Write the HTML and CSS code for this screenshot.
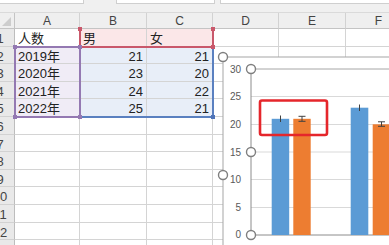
FILE: index.html
```html
<!DOCTYPE html>
<html lang="zh-CN">

<head>
    <meta charset="UTF-8" />
    <meta name="viewport" content="width=device-width, initial-scale=1.0" />
    <title>人数 - 图表</title>
    <link rel="stylesheet" href="styles.css">
</head>

<body>
    <!-- Formula bar strip -->
    <div class="topbar">
        <span class="box name-box"></span>
        <span class="box mid-box"></span>
        <span class="box formula-box"></span>
    </div>

    <div class="sheet">
        <div class="grid">
            <!-- Column headers -->
            <div class="corner"><span class="select-all"></span></div>
            <div class="col-head">A</div>
            <div class="col-head">B</div>
            <div class="col-head">C</div>
            <div class="col-head">D</div>
            <div class="col-head">E</div>
            <div class="col-head">F</div>

            <div class="row-head">1</div>
            <div class="cell">人数</div>
            <div class="cell fill-red">男</div>
            <div class="cell fill-red">女</div>
            <div class="cell"></div><div class="cell"></div><div class="cell"></div>

            <div class="row-head">2</div>
            <div class="cell fill-purple">2019年</div>
            <div class="cell fill-blue num">21</div>
            <div class="cell fill-blue num">21</div>
            <div class="cell"></div><div class="cell"></div><div class="cell"></div>

            <div class="row-head">3</div>
            <div class="cell fill-purple">2020年</div>
            <div class="cell fill-blue num">23</div>
            <div class="cell fill-blue num">20</div>
            <div class="cell"></div><div class="cell"></div><div class="cell"></div>

            <div class="row-head">4</div>
            <div class="cell fill-purple">2021年</div>
            <div class="cell fill-blue num">24</div>
            <div class="cell fill-blue num">22</div>
            <div class="cell"></div><div class="cell"></div><div class="cell"></div>

            <div class="row-head">5</div>
            <div class="cell fill-purple">2022年</div>
            <div class="cell fill-blue num">25</div>
            <div class="cell fill-blue num">21</div>
            <div class="cell"></div><div class="cell"></div><div class="cell"></div>

            <div class="row-head">6</div>
            <div class="cell"></div><div class="cell"></div><div class="cell"></div><div class="cell"></div><div class="cell"></div><div class="cell"></div>
            <div class="row-head">7</div>
            <div class="cell"></div><div class="cell"></div><div class="cell"></div><div class="cell"></div><div class="cell"></div><div class="cell"></div>
            <div class="row-head">8</div>
            <div class="cell"></div><div class="cell"></div><div class="cell"></div><div class="cell"></div><div class="cell"></div><div class="cell"></div>
            <div class="row-head">9</div>
            <div class="cell"></div><div class="cell"></div><div class="cell"></div><div class="cell"></div><div class="cell"></div><div class="cell"></div>
            <div class="row-head">10</div>
            <div class="cell"></div><div class="cell"></div><div class="cell"></div><div class="cell"></div><div class="cell"></div><div class="cell"></div>
            <div class="row-head">11</div>
            <div class="cell"></div><div class="cell"></div><div class="cell"></div><div class="cell"></div><div class="cell"></div><div class="cell"></div>
            <div class="row-head">12</div>
            <div class="cell"></div><div class="cell"></div><div class="cell"></div><div class="cell"></div><div class="cell"></div><div class="cell"></div>
            <div class="row-head">13</div>
            <div class="cell"></div><div class="cell"></div><div class="cell"></div><div class="cell"></div><div class="cell"></div><div class="cell"></div>
        </div>

        <!-- Chart source ranges, drawn over the cells on the same grid -->
        <div class="grid ranges">
            <div class="range range-blue">
                <span class="handle br"></span>
            </div>
            <div class="range range-red">
                <span class="handle tl"></span>
                <span class="handle tr"></span>
                <span class="handle bl"></span>
                <span class="handle br"></span>
            </div>
            <div class="range range-purple">
                <span class="handle tl"></span>
                <span class="handle tr"></span>
                <span class="handle bl"></span>
                <span class="handle br"></span>
            </div>
        </div>

        <!-- Chart object (page coordinates in viewBox) -->
        <svg class="chart" width="175" height="200" viewBox="218 52 175 200">
            <rect x="223" y="57" width="200" height="260" fill="#fff" stroke="#a6a6a6" stroke-width="1" />

            <!-- gridlines -->
            <g stroke="#d9d9d9" stroke-width="1">
                <line x1="251" y1="96.5" x2="400" y2="96.5" />
                <line x1="251" y1="124.5" x2="400" y2="124.5" />
                <line x1="251" y1="152" x2="400" y2="152" />
                <line x1="251" y1="179.5" x2="400" y2="179.5" />
                <line x1="251" y1="207.5" x2="400" y2="207.5" />
            </g>
            <line x1="251" y1="69" x2="400" y2="69" stroke="#a6a6a6" />
            <line x1="251" y1="69" x2="251" y2="235" stroke="#8c8c8c" />
            <line x1="251" y1="235" x2="400" y2="235" stroke="#8c8c8c" />

            <!-- axis labels -->
            <g class="axis-label" text-anchor="end">
                <text x="241" y="72.5">30</text>
                <text x="241" y="100">25</text>
                <text x="241" y="127.7">20</text>
                <text x="241" y="155.5">15</text>
                <text x="241" y="183">10</text>
                <text x="241" y="210.7">5</text>
                <text x="241" y="238.3">0</text>
            </g>

            <!-- bars -->
            <rect x="271.7" y="118.8" width="17.5" height="116.2" fill="#5b9bd5" />
            <rect x="293.3" y="118.8" width="17.4" height="116.2" fill="#ed7d31" />
            <rect x="350.7" y="107.7" width="17.6" height="127.3" fill="#5b9bd5" />
            <rect x="372.7" y="124.3" width="17.5" height="110.7" fill="#ed7d31" />

            <!-- error bars -->
            <g stroke="#404040" stroke-width="1">
                <line x1="280.5" y1="115.5" x2="280.5" y2="122" />
                <line x1="302" y1="116.3" x2="302" y2="121.3" />
                <line x1="298.5" y1="116.3" x2="305.5" y2="116.3" />
                <line x1="298.5" y1="121.3" x2="305.5" y2="121.3" />
                <line x1="359.5" y1="104.5" x2="359.5" y2="111" />
                <line x1="381.5" y1="121.8" x2="381.5" y2="126.3" />
                <line x1="378" y1="121.8" x2="385" y2="121.8" />
                <line x1="378" y1="126.3" x2="385" y2="126.3" />
            </g>

            <!-- selection handles -->
            <g fill="#fff" stroke="#7f7f7f" stroke-width="1.4">
                <circle cx="223" cy="57" r="4.5" />
                <circle cx="223" cy="175" r="4.5" />
                <circle cx="251" cy="69" r="4.5" />
                <circle cx="251" cy="152" r="4.5" />
                <circle cx="251" cy="235" r="4.5" />
            </g>

            <!-- annotation box -->
            <rect x="260" y="100.5" width="67" height="34.5" rx="2" fill="none" stroke="#e5262b" stroke-width="2.6" />
        </svg>
    </div>
</body>

</html>
```

FILE: styles.css
```css
body {
    margin: 0;
    width: 389px;
    height: 245px;
    overflow: hidden;
    background-color: #fff;
    font-family: "Liberation Sans", "Noto Sans CJK SC", sans-serif;
}

.topbar {
    display: flex;
    height: 13px;
    box-sizing: border-box;
    background-color: #f0f0f0;
    border-bottom: 1px solid #dadada;
}

.box {
    height: 3px;
    background: white;
    border-bottom: 1px solid #cfcfcf;
}

.name-box {
    width: 83px;
    border-right: 1px solid #cfcfcf;
}

.mid-box {
    width: 97px;
    margin-left: 32px;
    border-left: 1px solid #cfcfcf;
    border-right: 1px solid #cfcfcf;
}

.formula-box {
    flex: 1;
    margin-left: 5px;
    border-left: 1px solid #cfcfcf;
}

.sheet {
    position: relative;
}

.grid {
    display: grid;
    grid-template-columns: 29px 65px 67px 66px 66px 67px 66px;
    grid-template-rows: 16px repeat(13, 17.6px);
    margin-left: -14px;
    font-size: 13px;
    color: #222;
}

.ranges {
    position: absolute;
    top: 0;
    left: 0;
    pointer-events: none;
}

.corner,
.col-head {
    background-color: #efefef;
    border-right: 1px solid #d2d2d2;
    border-bottom: 1px solid #c4c4c4;
    box-sizing: border-box;
}

.corner {
    position: relative;
    border-right-color: #c4c4c4;
}

.select-all {
    position: absolute;
    right: 3px;
    bottom: 2px;
    width: 0;
    height: 0;
    border-left: 9px solid transparent;
    border-bottom: 9px solid #cdcdcd;
}

.col-head {
    font-size: 12px;
    color: #444;
    text-align: center;
    line-height: 16px;
}

.row-head {
    background-color: #e9e9e9;
    color: #444;
    text-align: center;
    border-right: 1px solid #bdbdbd;
    border-bottom: 1px solid #d2d2d2;
    box-sizing: border-box;
    line-height: 17px;
    padding-top: 1px;
}

.cell {
    border-right: 1px solid #d4d4d4;
    border-bottom: 1px solid #d4d4d4;
    box-sizing: border-box;
    line-height: 17px;
    padding: 1px 3px 0 3px;
    white-space: nowrap;
    overflow: hidden;
}

.num {
    text-align: right;
}

.fill-purple {
    background-color: #f0ecf6;
}

.fill-red {
    background-color: #fbe7e8;
}

.fill-blue {
    background-color: #e8eef8;
}

/* chart source range outlines */
.range {
    position: relative;
    margin: -1px;
    border: 2px solid;
}

.range-purple {
    grid-column: 2 / 3;
    grid-row: 3 / 7;
    border-color: #9479b2;
}

.range-red {
    grid-column: 3 / 5;
    grid-row: 2 / 3;
    border-color: #c9586b;
    border-top-color: transparent;
}

.range-blue {
    grid-column: 3 / 5;
    grid-row: 3 / 7;
    border-color: #5a80c0;
}

.handle {
    position: absolute;
    width: 4px;
    height: 4px;
}

.range-purple .handle { background-color: #9479b2; }
.range-red .handle { background-color: #c9586b; }
.range-blue .handle { background-color: #4f74b8; }

.handle.tl { left: -3px; top: -3px; }
.handle.tr { right: -3px; top: -3px; }
.handle.bl { left: -3px; bottom: -3px; }
.handle.br { right: -3px; bottom: -3px; }

.chart {
    position: absolute;
    left: 218px;
    top: 39px;
    overflow: visible;
}

.axis-label {
    font-family: "Liberation Sans", sans-serif;
    font-size: 10px;
    fill: #595959;
}
```
